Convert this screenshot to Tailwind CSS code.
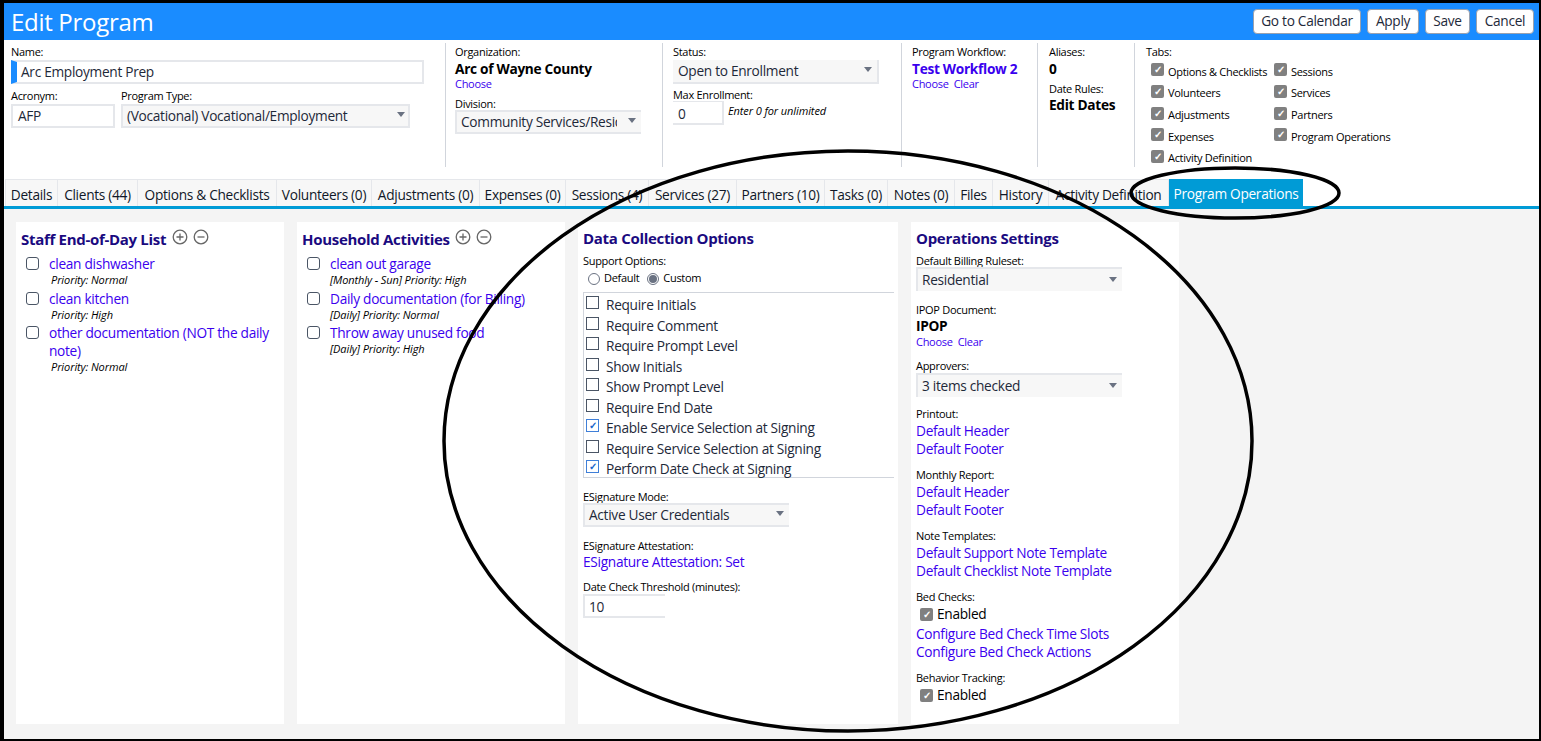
<!DOCTYPE html>
<html lang="en">
<head>
  <meta charset="UTF-8" />
  <title>Edit Program</title>
  <script src="https://cdn.jsdelivr.net/npm/@tailwindcss/browser@4"></script>
</head>
<body class="font-['Open_Sans',sans-serif] text-black bg-black">
<div class="relative w-[1541px] h-[741px] overflow-hidden border-l-4 border-t-[3px] border-b-2 border-r-2 border-black bg-[#f4f4f4] flex flex-col tracking-[-0.3px]">

  <!-- title bar -->
  <header class="h-[37px] bg-[#1a8cff] flex items-center justify-between pl-[7px] pr-[5px] shrink-0">
    <h1 class="text-[24px] leading-none text-white">Edit Program</h1>
    <div class="flex gap-[6px] text-[13.7px] -mt-[1px] text-gray-800">
      <button class="h-[25px] w-[108px] bg-white rounded border border-gray-400">Go to Calendar</button>
      <button class="h-[25px] w-[52px] bg-white rounded border border-gray-400">Apply</button>
      <button class="h-[25px] w-[45px] bg-white rounded border border-gray-400">Save</button>
      <button class="h-[25px] w-[58px] bg-white rounded border border-gray-400">Cancel</button>
    </div>
  </header>

  <!-- program fields -->
  <section class="h-[139px] bg-white flex pt-[3px] pl-[7px] text-[11px] shrink-0">
    <div class="w-[435px] h-[124px] border-r border-gray-300">
      <div class="leading-[16px] pt-[1px]">Name:</div>
      <div class="w-[413px] h-[24px] border-2 border-gray-200 border-l-[6px] border-l-[#1a8cff] pl-[4px] text-[13.7px] leading-[20px] text-gray-800">Arc Employment Prep</div>
      <div class="flex mt-[4px]">
        <div class="w-[110px]">
          <div class="leading-[16px]">Acronym:</div>
          <div class="w-[104px] h-[24px] border-2 border-gray-200 pl-[5px] text-[13.7px] leading-[20px] text-gray-800">AFP</div>
        </div>
        <div>
          <div class="leading-[16px]">Program Type:</div>
          <div class="relative w-[289px] h-[24px] border-2 border-gray-200 bg-[#f7f7f7] pl-[4px] text-[13.7px] leading-[20px] text-gray-800">(Vocational) Vocational/Employment<span class="absolute right-[3px] top-[6px] w-0 h-0 border-x-[4px] border-x-transparent border-t-[5px] border-t-gray-500"></span></div>
        </div>
      </div>
    </div>
    <div class="w-[217px] h-[124px] border-r border-gray-300 pl-[9px]">
      <div class="leading-[16px] pt-[1px]">Organization:</div>
      <div class="text-[13.7px] leading-[17px] font-bold">Arc of Wayne County</div>
      <a class="block leading-[14px] text-[#3a00ee]">Choose</a>
      <div class="leading-[12px] mt-[7px]">Division:</div>
      <div class="relative w-[186px] h-[24px] border-2 border-gray-200 border-r-0 bg-[#f7f7f7] pl-[4px] text-[13.7px] leading-[20px] text-gray-800 whitespace-nowrap overflow-hidden"><span class="block w-[156px] overflow-hidden">Community Services/Residential</span><span class="absolute right-[5px] top-[6px] w-0 h-0 border-x-[4px] border-x-transparent border-t-[5px] border-t-gray-500"></span></div>
    </div>
    <div class="w-[239px] h-[124px] border-r border-gray-300 pl-[10px]">
      <div class="leading-[16px] pt-[1px]">Status:</div>
      <div class="relative w-[206px] h-[24px] border-b-2 border-r-2 border-gray-200 bg-[#f7f7f7] pl-[5px] text-[13.7px] leading-[22px] text-gray-800">Open to Enrollment<span class="absolute right-[5px] top-[7px] w-0 h-0 border-x-[4px] border-x-transparent border-t-[5px] border-t-gray-500"></span></div>
      <div class="leading-[13px] mt-[4px]">Max Enrollment:</div>
      <div class="flex">
        <div class="w-[51px] h-[24px] border-t border-b-2 border-r-2 border-gray-200 pl-[5px] text-[13.7px] leading-[24px] text-gray-800">0</div>
        <i class="pl-[4px] text-[11px] tracking-[-0.1px] leading-[20px]">Enter 0 for unlimited</i>
      </div>
    </div>
    <div class="w-[136px] h-[124px] border-r border-gray-300 pl-[10px]">
      <div class="leading-[16px] pt-[1px]">Program Workflow:</div>
      <a class="block text-[13.7px] leading-[17px] font-bold text-[#3a00ee]">Test Workflow 2</a>
      <div class="leading-[14px] text-[#3a00ee]"><a>Choose</a>&nbsp; <a>Clear</a></div>
    </div>
    <div class="w-[97px] h-[124px] border-r border-gray-300 pl-[11px]">
      <div class="leading-[16px] pt-[1px]">Aliases:</div>
      <div class="text-[13.7px] leading-[17px] font-bold">0</div>
      <div class="leading-[14px] mt-[5px]">Date Rules:</div>
      <div class="text-[13.7px] leading-[17px] font-bold">Edit Dates</div>
    </div>
    <div class="pl-[11px]">
      <div class="leading-[16px] pt-[1px]">Tabs:</div>
      <div class="grid grid-cols-[123px_auto] pl-[5px] mt-[1px]">
        <label class="h-[21.7px] flex items-center gap-[4px]"><span class="w-[13px] h-[13px] rounded-[2px] bg-[#808080] text-white text-[10px] leading-[13px] text-center font-bold -mt-[4px]">✓</span>Options &amp; Checklists</label>
        <label class="h-[21.7px] flex items-center gap-[4px]"><span class="w-[13px] h-[13px] rounded-[2px] bg-[#808080] text-white text-[10px] leading-[13px] text-center font-bold -mt-[4px]">✓</span>Sessions</label>
        <label class="h-[21.7px] flex items-center gap-[4px]"><span class="w-[13px] h-[13px] rounded-[2px] bg-[#808080] text-white text-[10px] leading-[13px] text-center font-bold -mt-[4px]">✓</span>Volunteers</label>
        <label class="h-[21.7px] flex items-center gap-[4px]"><span class="w-[13px] h-[13px] rounded-[2px] bg-[#808080] text-white text-[10px] leading-[13px] text-center font-bold -mt-[4px]">✓</span>Services</label>
        <label class="h-[21.7px] flex items-center gap-[4px]"><span class="w-[13px] h-[13px] rounded-[2px] bg-[#808080] text-white text-[10px] leading-[13px] text-center font-bold -mt-[4px]">✓</span>Adjustments</label>
        <label class="h-[21.7px] flex items-center gap-[4px]"><span class="w-[13px] h-[13px] rounded-[2px] bg-[#808080] text-white text-[10px] leading-[13px] text-center font-bold -mt-[4px]">✓</span>Partners</label>
        <label class="h-[21.7px] flex items-center gap-[4px]"><span class="w-[13px] h-[13px] rounded-[2px] bg-[#808080] text-white text-[10px] leading-[13px] text-center font-bold -mt-[4px]">✓</span>Expenses</label>
        <label class="h-[21.7px] flex items-center gap-[4px]"><span class="w-[13px] h-[13px] rounded-[2px] bg-[#808080] text-white text-[10px] leading-[13px] text-center font-bold -mt-[4px]">✓</span>Program Operations</label>
        <label class="h-[21.7px] flex items-center gap-[4px]"><span class="w-[13px] h-[13px] rounded-[2px] bg-[#808080] text-white text-[10px] leading-[13px] text-center font-bold -mt-[4px]">✓</span>Activity Definition</label>
      </div>
    </div>
  </section>

  <!-- tabs -->
  <nav class="h-[30px] bg-white flex pl-[1px] text-[13.7px] leading-[30px] text-center border-b-[3px] border-[#009bd6] shrink-0 whitespace-nowrap text-gray-900">
    <a class="w-[53px] bg-[#f7f7f7] border-l border-t border-r border-gray-200">Details</a>
    <a class="w-[80px] bg-[#f7f7f7] border-t border-r border-gray-200">Clients (44)</a>
    <a class="w-[139px] bg-[#f7f7f7] border-t border-r border-gray-200">Options &amp; Checklists</a>
    <a class="w-[95px] bg-[#f7f7f7] border-t border-r border-gray-200">Volunteers (0)</a>
    <a class="w-[108px] bg-[#f7f7f7] border-t border-r border-gray-200">Adjustments (0)</a>
    <a class="w-[86px] bg-[#f7f7f7] border-t border-r border-gray-200">Expenses (0)</a>
    <a class="w-[83px] bg-[#f7f7f7] border-t border-r border-gray-200">Sessions (4)</a>
    <a class="w-[88px] bg-[#f7f7f7] border-t border-r border-gray-200">Services (27)</a>
    <a class="w-[88px] bg-[#f7f7f7] border-t border-r border-gray-200">Partners (10)</a>
    <a class="w-[63px] bg-[#f7f7f7] border-t border-r border-gray-200">Tasks (0)</a>
    <a class="w-[67px] bg-[#f7f7f7] border-t border-r border-gray-200">Notes (0)</a>
    <a class="w-[38px] bg-[#f7f7f7] border-t border-r border-gray-200">Files</a>
    <a class="w-[56px] bg-[#f7f7f7] border-t border-r border-gray-200">History</a>
    <a class="w-[120px] bg-[#f7f7f7] border-t border-r border-gray-200">Activity Definition</a>
    <a class="w-[134px] bg-[#009bd6] text-white">Program Operations</a>
  </nav>

  <!-- panels -->
  <main class="flex-1 flex gap-[13px] pl-[12px] pt-[13px] pb-[15px] min-h-0">
    <section class="w-[268px] bg-white pl-[5px] pr-[8px] pt-[6px]">
      <h2 class="flex items-center gap-[5px] text-[15px] leading-[22px] font-bold text-[#1a0a80]">Staff End-of-Day List
        <svg class="w-[16px] h-[16px] -mt-[4px] ml-[1px]" viewBox="0 0 16 16" fill="none" stroke="#666" stroke-width="1.3"><circle cx="8" cy="8" r="6.8"/><path d="M4.5 8h7M8 4.5v7"/></svg>
        <svg class="w-[16px] h-[16px] -mt-[4px]" viewBox="0 0 16 16" fill="none" stroke="#666" stroke-width="1.3"><circle cx="8" cy="8" r="6.8"/><path d="M4.5 8h7"/></svg>
      </h2>
      <ul class="mt-[5px] pl-[5px]">
        <li class="flex gap-[10px]"><span class="mt-[2px] w-[13px] h-[13px] shrink-0 rounded-[3px] border border-gray-600"></span><div><a class="block text-[13.7px] leading-[18px] text-[#3a00ee]">clean dishwasher</a><i class="block text-[11px] tracking-[-0.1px] leading-[15px] -mt-[1px] pl-[2px]">Priority: Normal</i></div></li>
        <li class="flex gap-[10px] mt-[2.5px]"><span class="mt-[2px] w-[13px] h-[13px] shrink-0 rounded-[3px] border border-gray-600"></span><div><a class="block text-[13.7px] leading-[18px] text-[#3a00ee]">clean kitchen</a><i class="block text-[11px] tracking-[-0.1px] leading-[15px] -mt-[1px] pl-[2px]">Priority: High</i></div></li>
        <li class="flex gap-[10px] mt-[2.5px]"><span class="mt-[2px] w-[13px] h-[13px] shrink-0 rounded-[3px] border border-gray-600"></span><div><a class="block text-[13.7px] leading-[18px] text-[#3a00ee]">other documentation (NOT the daily note)</a><i class="block text-[11px] tracking-[-0.1px] leading-[15px] -mt-[1px] pl-[2px]">Priority: Normal</i></div></li>
      </ul>
    </section>

    <section class="w-[268px] bg-white pl-[5px] pr-[8px] pt-[6px]">
      <h2 class="flex items-center gap-[5px] text-[15px] leading-[22px] font-bold text-[#1a0a80]">Household Activities
        <svg class="w-[16px] h-[16px] -mt-[4px]" viewBox="0 0 16 16" fill="none" stroke="#666" stroke-width="1.3"><circle cx="8" cy="8" r="6.8"/><path d="M4.5 8h7M8 4.5v7"/></svg>
        <svg class="w-[16px] h-[16px] -mt-[4px]" viewBox="0 0 16 16" fill="none" stroke="#666" stroke-width="1.3"><circle cx="8" cy="8" r="6.8"/><path d="M4.5 8h7"/></svg>
      </h2>
      <ul class="mt-[5px] pl-[5px]">
        <li class="flex gap-[10px]"><span class="mt-[2px] w-[13px] h-[13px] shrink-0 rounded-[3px] border border-gray-600"></span><div><a class="block text-[13.7px] leading-[18px] text-[#3a00ee]">clean out garage</a><i class="block text-[11px] tracking-[-0.1px] leading-[15px] -mt-[1px]">[Monthly - Sun] Priority: High</i></div></li>
        <li class="flex gap-[10px] mt-[2.5px]"><span class="mt-[2px] w-[13px] h-[13px] shrink-0 rounded-[3px] border border-gray-600"></span><div><a class="block text-[13.7px] leading-[18px] text-[#3a00ee]">Daily documentation (for Billing)</a><i class="block text-[11px] tracking-[-0.1px] leading-[15px] -mt-[1px]">[Daily] Priority: Normal</i></div></li>
        <li class="flex gap-[10px] mt-[2.5px]"><span class="mt-[2px] w-[13px] h-[13px] shrink-0 rounded-[3px] border border-gray-600"></span><div><a class="block text-[13.7px] leading-[18px] text-[#3a00ee]">Throw away unused food</a><i class="block text-[11px] tracking-[-0.1px] leading-[15px] -mt-[1px]">[Daily] Priority: High</i></div></li>
      </ul>
    </section>

    <section class="w-[320px] bg-white pl-[5px] pr-[4px] pt-[5px] text-[11px]">
      <h2 class="text-[15px] leading-[22px] font-bold text-[#1a0a80]">Data Collection Options</h2>
      <div class="leading-[16px] mt-[4px]">Support Options:</div>
      <div class="flex items-center gap-[4px] pl-[5px] h-[17px] mt-[1px]">
        <span class="w-[12px] h-[12px] rounded-full border border-gray-500"></span><span class="mr-[4px]">Default</span>
        <span class="w-[12px] h-[12px] rounded-full border border-gray-500 flex items-center justify-center"><span class="w-[8px] h-[8px] rounded-full bg-gray-500"></span></span><span>Custom</span>
      </div>
      <div class="mt-[5px] w-[311px] h-[186px] border-y border-l border-gray-300 pl-[2px] pt-[1px] text-[13.7px] text-gray-800">
        <label class="h-[20.5px] flex gap-[7px] leading-[21px]"><span class="mt-[2px] w-[13px] h-[13px] border border-gray-600"></span>Require Initials</label>
        <label class="h-[20.5px] flex gap-[7px] leading-[21px]"><span class="mt-[2px] w-[13px] h-[13px] border border-gray-600"></span>Require Comment</label>
        <label class="h-[20.5px] flex gap-[7px] leading-[21px]"><span class="mt-[2px] w-[13px] h-[13px] border border-gray-600"></span>Require Prompt Level</label>
        <label class="h-[20.5px] flex gap-[7px] leading-[21px]"><span class="mt-[2px] w-[13px] h-[13px] border border-gray-600"></span>Show Initials</label>
        <label class="h-[20.5px] flex gap-[7px] leading-[21px]"><span class="mt-[2px] w-[13px] h-[13px] border border-gray-600"></span>Show Prompt Level</label>
        <label class="h-[20.5px] flex gap-[7px] leading-[21px]"><span class="mt-[2px] w-[13px] h-[13px] border border-gray-600"></span>Require End Date</label>
        <label class="h-[20.5px] flex gap-[7px] leading-[21px]"><span class="mt-[2px] w-[13px] h-[13px] border border-[#3f7fd8] text-[#1a66cc] text-[10px] leading-[11px] text-center font-bold">✓</span>Enable Service Selection at Signing</label>
        <label class="h-[20.5px] flex gap-[7px] leading-[21px]"><span class="mt-[2px] w-[13px] h-[13px] border border-gray-600"></span>Require Service Selection at Signing</label>
        <label class="h-[20.5px] flex gap-[7px] leading-[21px]"><span class="mt-[2px] w-[13px] h-[13px] border border-[#3f7fd8] text-[#1a66cc] text-[10px] leading-[11px] text-center font-bold">✓</span>Perform Date Check at Signing</label>
      </div>
      <div class="leading-[12px] mt-[13px]">ESignature Mode:</div>
      <div class="relative w-[206px] h-[24px] border-2 border-gray-200 border-r-0 bg-[#f7f7f7] pl-[4px] text-[13.7px] leading-[20px] text-gray-800">Active User Credentials<span class="absolute right-[5px] top-[6px] w-0 h-0 border-x-[4px] border-x-transparent border-t-[5px] border-t-gray-500"></span></div>
      <div class="leading-[12px] mt-[13px]">ESignature Attestation:</div>
      <a class="block text-[13.7px] leading-[19px] text-[#3a00ee]">ESignature Attestation: Set</a>
      <div class="leading-[14px] mt-[9px]">Date Check Threshold (minutes):</div>
      <div class="w-[82px] h-[24px] border-2 border-gray-200 border-r-0 pl-[4px] text-[13.7px] leading-[21px] text-gray-800">10</div>
    </section>

    <section class="w-[268px] bg-white pl-[5px] pt-[5px] text-[11px]">
      <h2 class="text-[15px] leading-[22px] font-bold text-[#1a0a80]">Operations Settings</h2>
      <div class="leading-[12px] mt-[6px]">Default Billing Ruleset:</div>
      <div class="relative w-[206px] h-[24px] border-l-2 border-t-2 border-gray-200 bg-[#f7f7f7] pl-[4px] text-[13.7px] leading-[22px] text-gray-800">Residential<span class="absolute right-[5px] top-[8px] w-0 h-0 border-x-[4px] border-x-transparent border-t-[5px] border-t-gray-500"></span></div>
      <div class="leading-[15px] mt-[11px]">IPOP Document:</div>
      <div class="text-[13.7px] leading-[17px] font-bold">IPOP</div>
      <div class="leading-[15px] text-[#3a00ee]"><a>Choose</a>&nbsp; <a>Clear</a></div>
      <div class="leading-[14px] mt-[10px]">Approvers:</div>
      <div class="relative w-[206px] h-[24px] border-l-2 border-t-2 border-gray-200 bg-[#f7f7f7] pl-[4px] text-[13.7px] leading-[22px] text-gray-800">3 items checked<span class="absolute right-[5px] top-[8px] w-0 h-0 border-x-[4px] border-x-transparent border-t-[5px] border-t-gray-500"></span></div>
      <div class="leading-[16px] mt-[9px]">Printout:</div>
      <a class="block text-[13.7px] leading-[18px] text-[#3a00ee]">Default Header</a>
      <a class="block text-[13.7px] leading-[18px] text-[#3a00ee]">Default Footer</a>
      <div class="leading-[16px] mt-[9px]">Monthly Report:</div>
      <a class="block text-[13.7px] leading-[18px] text-[#3a00ee]">Default Header</a>
      <a class="block text-[13.7px] leading-[18px] text-[#3a00ee]">Default Footer</a>
      <div class="leading-[16px] mt-[9px]">Note Templates:</div>
      <a class="block text-[13.7px] leading-[18px] text-[#3a00ee]">Default Support Note Template</a>
      <a class="block text-[13.7px] leading-[18px] text-[#3a00ee]">Default Checklist Note Template</a>
      <div class="leading-[16px] mt-[9px]">Bed Checks:</div>
      <label class="flex items-center gap-[4px] pl-[4px] text-[13.7px] leading-[18px]"><span class="w-[13px] h-[13px] rounded-[2px] bg-[#808080] text-white text-[10px] leading-[13px] text-center font-bold">✓</span>Enabled</label>
      <a class="block text-[13.7px] leading-[18px] mt-[2px] text-[#3a00ee]">Configure Bed Check Time Slots</a>
      <a class="block text-[13.7px] leading-[18px] text-[#3a00ee]">Configure Bed Check Actions</a>
      <div class="leading-[16px] mt-[9px]">Behavior Tracking:</div>
      <label class="flex items-center gap-[4px] pl-[4px] text-[13.7px] leading-[18px]"><span class="w-[13px] h-[13px] rounded-[2px] bg-[#808080] text-white text-[10px] leading-[13px] text-center font-bold">✓</span>Enabled</label>
    </section>
  </main>

  <!-- hand-drawn annotation circles -->
  <svg class="absolute left-[-4px] top-[-3px] w-[1541px] h-[741px] pointer-events-none" viewBox="0 0 1541 741" fill="none" stroke="#000" stroke-width="3.5">
    <ellipse cx="848" cy="441" rx="404" ry="290"/>
    <ellipse cx="1235" cy="193" rx="104" ry="25"/>
  </svg>
</div>
</body>
</html>
